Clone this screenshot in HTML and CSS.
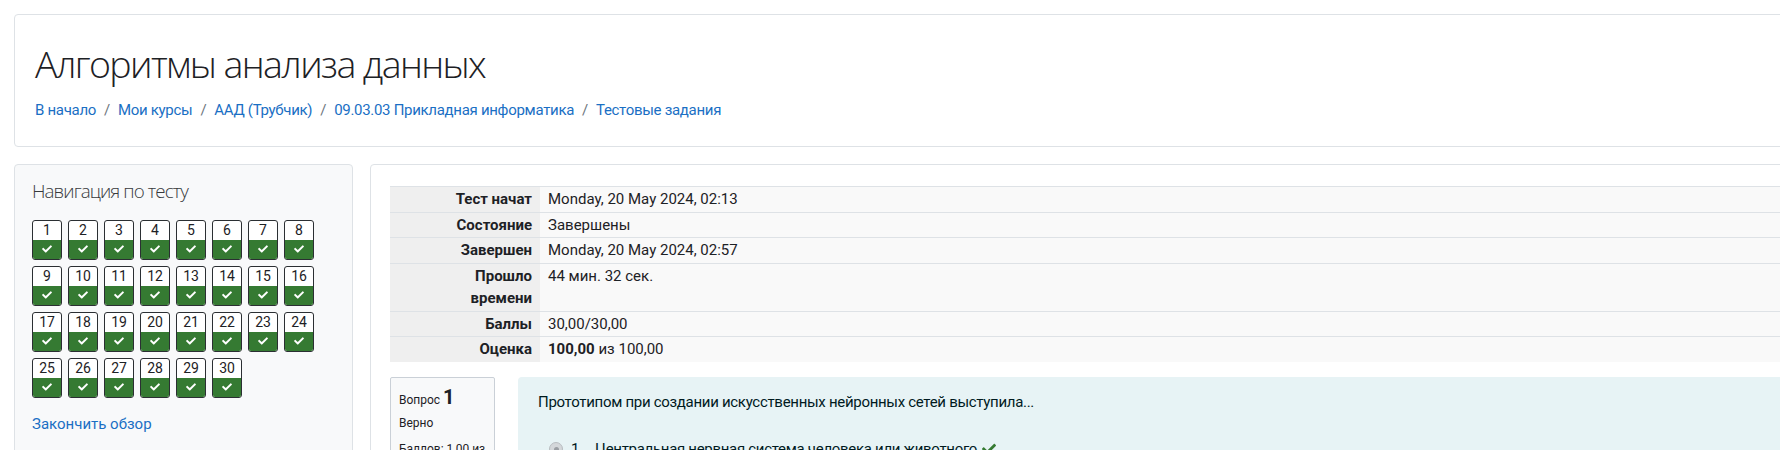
FILE: index.html
```html
<!DOCTYPE html>
<html lang="ru">
<head>
<meta charset="utf-8">
<title>Алгоритмы анализа данных</title>
<link rel="stylesheet" href="styles.css">
</head>
<body>
<div class="page">
  <header class="card header-card">
    <h1 class="title">Алгоритмы анализа данных</h1>
    <nav class="crumbs">
      <a href="#">В начало</a><span class="sep">/</span>
      <a href="#">Мои курсы</a><span class="sep">/</span>
      <a href="#">ААД (Трубчик)</a><span class="sep">/</span>
      <a href="#">09.03.03 Прикладная информатика</a><span class="sep">/</span>
      <a href="#">Тестовые задания</a>
    </nav>
  </header>

  <div class="main-row">
    <aside class="card nav-block">
      <h5 class="nav-title">Навигация по тесту</h5>
      <div class="qn-grid">
        <a class="qn" href="#"><span class="num">1</span><span class="ok"><svg viewBox="0 0 512 512"><path d="M173.9 439.4l-166.4-166.4c-10-10-10-26.2 0-36.2l36.2-36.2c10-10 26.2-10 36.2 0L192 312.7 432.1 72.6c10-10 26.2-10 36.2 0l36.2 36.2c10 10 10 26.2 0 36.2l-294.4 294.4c-10 10-26.2 10-36.2 0z"/></svg></span></a>
        <a class="qn" href="#"><span class="num">2</span><span class="ok"><svg viewBox="0 0 512 512"><path d="M173.9 439.4l-166.4-166.4c-10-10-10-26.2 0-36.2l36.2-36.2c10-10 26.2-10 36.2 0L192 312.7 432.1 72.6c10-10 26.2-10 36.2 0l36.2 36.2c10 10 10 26.2 0 36.2l-294.4 294.4c-10 10-26.2 10-36.2 0z"/></svg></span></a>
        <a class="qn" href="#"><span class="num">3</span><span class="ok"><svg viewBox="0 0 512 512"><path d="M173.9 439.4l-166.4-166.4c-10-10-10-26.2 0-36.2l36.2-36.2c10-10 26.2-10 36.2 0L192 312.7 432.1 72.6c10-10 26.2-10 36.2 0l36.2 36.2c10 10 10 26.2 0 36.2l-294.4 294.4c-10 10-26.2 10-36.2 0z"/></svg></span></a>
        <a class="qn" href="#"><span class="num">4</span><span class="ok"><svg viewBox="0 0 512 512"><path d="M173.9 439.4l-166.4-166.4c-10-10-10-26.2 0-36.2l36.2-36.2c10-10 26.2-10 36.2 0L192 312.7 432.1 72.6c10-10 26.2-10 36.2 0l36.2 36.2c10 10 10 26.2 0 36.2l-294.4 294.4c-10 10-26.2 10-36.2 0z"/></svg></span></a>
        <a class="qn" href="#"><span class="num">5</span><span class="ok"><svg viewBox="0 0 512 512"><path d="M173.9 439.4l-166.4-166.4c-10-10-10-26.2 0-36.2l36.2-36.2c10-10 26.2-10 36.2 0L192 312.7 432.1 72.6c10-10 26.2-10 36.2 0l36.2 36.2c10 10 10 26.2 0 36.2l-294.4 294.4c-10 10-26.2 10-36.2 0z"/></svg></span></a>
        <a class="qn" href="#"><span class="num">6</span><span class="ok"><svg viewBox="0 0 512 512"><path d="M173.9 439.4l-166.4-166.4c-10-10-10-26.2 0-36.2l36.2-36.2c10-10 26.2-10 36.2 0L192 312.7 432.1 72.6c10-10 26.2-10 36.2 0l36.2 36.2c10 10 10 26.2 0 36.2l-294.4 294.4c-10 10-26.2 10-36.2 0z"/></svg></span></a>
        <a class="qn" href="#"><span class="num">7</span><span class="ok"><svg viewBox="0 0 512 512"><path d="M173.9 439.4l-166.4-166.4c-10-10-10-26.2 0-36.2l36.2-36.2c10-10 26.2-10 36.2 0L192 312.7 432.1 72.6c10-10 26.2-10 36.2 0l36.2 36.2c10 10 10 26.2 0 36.2l-294.4 294.4c-10 10-26.2 10-36.2 0z"/></svg></span></a>
        <a class="qn" href="#"><span class="num">8</span><span class="ok"><svg viewBox="0 0 512 512"><path d="M173.9 439.4l-166.4-166.4c-10-10-10-26.2 0-36.2l36.2-36.2c10-10 26.2-10 36.2 0L192 312.7 432.1 72.6c10-10 26.2-10 36.2 0l36.2 36.2c10 10 10 26.2 0 36.2l-294.4 294.4c-10 10-26.2 10-36.2 0z"/></svg></span></a>
        <a class="qn" href="#"><span class="num">9</span><span class="ok"><svg viewBox="0 0 512 512"><path d="M173.9 439.4l-166.4-166.4c-10-10-10-26.2 0-36.2l36.2-36.2c10-10 26.2-10 36.2 0L192 312.7 432.1 72.6c10-10 26.2-10 36.2 0l36.2 36.2c10 10 10 26.2 0 36.2l-294.4 294.4c-10 10-26.2 10-36.2 0z"/></svg></span></a>
        <a class="qn" href="#"><span class="num">10</span><span class="ok"><svg viewBox="0 0 512 512"><path d="M173.9 439.4l-166.4-166.4c-10-10-10-26.2 0-36.2l36.2-36.2c10-10 26.2-10 36.2 0L192 312.7 432.1 72.6c10-10 26.2-10 36.2 0l36.2 36.2c10 10 10 26.2 0 36.2l-294.4 294.4c-10 10-26.2 10-36.2 0z"/></svg></span></a>
        <a class="qn" href="#"><span class="num">11</span><span class="ok"><svg viewBox="0 0 512 512"><path d="M173.9 439.4l-166.4-166.4c-10-10-10-26.2 0-36.2l36.2-36.2c10-10 26.2-10 36.2 0L192 312.7 432.1 72.6c10-10 26.2-10 36.2 0l36.2 36.2c10 10 10 26.2 0 36.2l-294.4 294.4c-10 10-26.2 10-36.2 0z"/></svg></span></a>
        <a class="qn" href="#"><span class="num">12</span><span class="ok"><svg viewBox="0 0 512 512"><path d="M173.9 439.4l-166.4-166.4c-10-10-10-26.2 0-36.2l36.2-36.2c10-10 26.2-10 36.2 0L192 312.7 432.1 72.6c10-10 26.2-10 36.2 0l36.2 36.2c10 10 10 26.2 0 36.2l-294.4 294.4c-10 10-26.2 10-36.2 0z"/></svg></span></a>
        <a class="qn" href="#"><span class="num">13</span><span class="ok"><svg viewBox="0 0 512 512"><path d="M173.9 439.4l-166.4-166.4c-10-10-10-26.2 0-36.2l36.2-36.2c10-10 26.2-10 36.2 0L192 312.7 432.1 72.6c10-10 26.2-10 36.2 0l36.2 36.2c10 10 10 26.2 0 36.2l-294.4 294.4c-10 10-26.2 10-36.2 0z"/></svg></span></a>
        <a class="qn" href="#"><span class="num">14</span><span class="ok"><svg viewBox="0 0 512 512"><path d="M173.9 439.4l-166.4-166.4c-10-10-10-26.2 0-36.2l36.2-36.2c10-10 26.2-10 36.2 0L192 312.7 432.1 72.6c10-10 26.2-10 36.2 0l36.2 36.2c10 10 10 26.2 0 36.2l-294.4 294.4c-10 10-26.2 10-36.2 0z"/></svg></span></a>
        <a class="qn" href="#"><span class="num">15</span><span class="ok"><svg viewBox="0 0 512 512"><path d="M173.9 439.4l-166.4-166.4c-10-10-10-26.2 0-36.2l36.2-36.2c10-10 26.2-10 36.2 0L192 312.7 432.1 72.6c10-10 26.2-10 36.2 0l36.2 36.2c10 10 10 26.2 0 36.2l-294.4 294.4c-10 10-26.2 10-36.2 0z"/></svg></span></a>
        <a class="qn" href="#"><span class="num">16</span><span class="ok"><svg viewBox="0 0 512 512"><path d="M173.9 439.4l-166.4-166.4c-10-10-10-26.2 0-36.2l36.2-36.2c10-10 26.2-10 36.2 0L192 312.7 432.1 72.6c10-10 26.2-10 36.2 0l36.2 36.2c10 10 10 26.2 0 36.2l-294.4 294.4c-10 10-26.2 10-36.2 0z"/></svg></span></a>
        <a class="qn" href="#"><span class="num">17</span><span class="ok"><svg viewBox="0 0 512 512"><path d="M173.9 439.4l-166.4-166.4c-10-10-10-26.2 0-36.2l36.2-36.2c10-10 26.2-10 36.2 0L192 312.7 432.1 72.6c10-10 26.2-10 36.2 0l36.2 36.2c10 10 10 26.2 0 36.2l-294.4 294.4c-10 10-26.2 10-36.2 0z"/></svg></span></a>
        <a class="qn" href="#"><span class="num">18</span><span class="ok"><svg viewBox="0 0 512 512"><path d="M173.9 439.4l-166.4-166.4c-10-10-10-26.2 0-36.2l36.2-36.2c10-10 26.2-10 36.2 0L192 312.7 432.1 72.6c10-10 26.2-10 36.2 0l36.2 36.2c10 10 10 26.2 0 36.2l-294.4 294.4c-10 10-26.2 10-36.2 0z"/></svg></span></a>
        <a class="qn" href="#"><span class="num">19</span><span class="ok"><svg viewBox="0 0 512 512"><path d="M173.9 439.4l-166.4-166.4c-10-10-10-26.2 0-36.2l36.2-36.2c10-10 26.2-10 36.2 0L192 312.7 432.1 72.6c10-10 26.2-10 36.2 0l36.2 36.2c10 10 10 26.2 0 36.2l-294.4 294.4c-10 10-26.2 10-36.2 0z"/></svg></span></a>
        <a class="qn" href="#"><span class="num">20</span><span class="ok"><svg viewBox="0 0 512 512"><path d="M173.9 439.4l-166.4-166.4c-10-10-10-26.2 0-36.2l36.2-36.2c10-10 26.2-10 36.2 0L192 312.7 432.1 72.6c10-10 26.2-10 36.2 0l36.2 36.2c10 10 10 26.2 0 36.2l-294.4 294.4c-10 10-26.2 10-36.2 0z"/></svg></span></a>
        <a class="qn" href="#"><span class="num">21</span><span class="ok"><svg viewBox="0 0 512 512"><path d="M173.9 439.4l-166.4-166.4c-10-10-10-26.2 0-36.2l36.2-36.2c10-10 26.2-10 36.2 0L192 312.7 432.1 72.6c10-10 26.2-10 36.2 0l36.2 36.2c10 10 10 26.2 0 36.2l-294.4 294.4c-10 10-26.2 10-36.2 0z"/></svg></span></a>
        <a class="qn" href="#"><span class="num">22</span><span class="ok"><svg viewBox="0 0 512 512"><path d="M173.9 439.4l-166.4-166.4c-10-10-10-26.2 0-36.2l36.2-36.2c10-10 26.2-10 36.2 0L192 312.7 432.1 72.6c10-10 26.2-10 36.2 0l36.2 36.2c10 10 10 26.2 0 36.2l-294.4 294.4c-10 10-26.2 10-36.2 0z"/></svg></span></a>
        <a class="qn" href="#"><span class="num">23</span><span class="ok"><svg viewBox="0 0 512 512"><path d="M173.9 439.4l-166.4-166.4c-10-10-10-26.2 0-36.2l36.2-36.2c10-10 26.2-10 36.2 0L192 312.7 432.1 72.6c10-10 26.2-10 36.2 0l36.2 36.2c10 10 10 26.2 0 36.2l-294.4 294.4c-10 10-26.2 10-36.2 0z"/></svg></span></a>
        <a class="qn" href="#"><span class="num">24</span><span class="ok"><svg viewBox="0 0 512 512"><path d="M173.9 439.4l-166.4-166.4c-10-10-10-26.2 0-36.2l36.2-36.2c10-10 26.2-10 36.2 0L192 312.7 432.1 72.6c10-10 26.2-10 36.2 0l36.2 36.2c10 10 10 26.2 0 36.2l-294.4 294.4c-10 10-26.2 10-36.2 0z"/></svg></span></a>
        <a class="qn" href="#"><span class="num">25</span><span class="ok"><svg viewBox="0 0 512 512"><path d="M173.9 439.4l-166.4-166.4c-10-10-10-26.2 0-36.2l36.2-36.2c10-10 26.2-10 36.2 0L192 312.7 432.1 72.6c10-10 26.2-10 36.2 0l36.2 36.2c10 10 10 26.2 0 36.2l-294.4 294.4c-10 10-26.2 10-36.2 0z"/></svg></span></a>
        <a class="qn" href="#"><span class="num">26</span><span class="ok"><svg viewBox="0 0 512 512"><path d="M173.9 439.4l-166.4-166.4c-10-10-10-26.2 0-36.2l36.2-36.2c10-10 26.2-10 36.2 0L192 312.7 432.1 72.6c10-10 26.2-10 36.2 0l36.2 36.2c10 10 10 26.2 0 36.2l-294.4 294.4c-10 10-26.2 10-36.2 0z"/></svg></span></a>
        <a class="qn" href="#"><span class="num">27</span><span class="ok"><svg viewBox="0 0 512 512"><path d="M173.9 439.4l-166.4-166.4c-10-10-10-26.2 0-36.2l36.2-36.2c10-10 26.2-10 36.2 0L192 312.7 432.1 72.6c10-10 26.2-10 36.2 0l36.2 36.2c10 10 10 26.2 0 36.2l-294.4 294.4c-10 10-26.2 10-36.2 0z"/></svg></span></a>
        <a class="qn" href="#"><span class="num">28</span><span class="ok"><svg viewBox="0 0 512 512"><path d="M173.9 439.4l-166.4-166.4c-10-10-10-26.2 0-36.2l36.2-36.2c10-10 26.2-10 36.2 0L192 312.7 432.1 72.6c10-10 26.2-10 36.2 0l36.2 36.2c10 10 10 26.2 0 36.2l-294.4 294.4c-10 10-26.2 10-36.2 0z"/></svg></span></a>
        <a class="qn" href="#"><span class="num">29</span><span class="ok"><svg viewBox="0 0 512 512"><path d="M173.9 439.4l-166.4-166.4c-10-10-10-26.2 0-36.2l36.2-36.2c10-10 26.2-10 36.2 0L192 312.7 432.1 72.6c10-10 26.2-10 36.2 0l36.2 36.2c10 10 10 26.2 0 36.2l-294.4 294.4c-10 10-26.2 10-36.2 0z"/></svg></span></a>
        <a class="qn" href="#"><span class="num">30</span><span class="ok"><svg viewBox="0 0 512 512"><path d="M173.9 439.4l-166.4-166.4c-10-10-10-26.2 0-36.2l36.2-36.2c10-10 26.2-10 36.2 0L192 312.7 432.1 72.6c10-10 26.2-10 36.2 0l36.2 36.2c10 10 10 26.2 0 36.2l-294.4 294.4c-10 10-26.2 10-36.2 0z"/></svg></span></a>
      </div>
      <a class="finish" href="#">Закончить обзор</a>
    </aside>

    <section class="card main-card">
      <table class="summary">
        <tr><th>Тест начат</th><td>Monday, 20 May 2024, 02:13</td></tr>
        <tr><th>Состояние</th><td>Завершены</td></tr>
        <tr><th>Завершен</th><td>Monday, 20 May 2024, 02:57</td></tr>
        <tr><th>Прошло времени</th><td>44 мин. 32 сек.</td></tr>
        <tr><th>Баллы</th><td>30,00/30,00</td></tr>
        <tr><th>Оценка</th><td><b>100,00</b> из 100,00</td></tr>
      </table>

      <div class="que">
        <div class="info">
          <div class="qno">Вопрос <span class="qnum">1</span></div>
          <div class="state">Верно</div>
          <div class="grade">Баллов: 1,00 из 1,00</div>
        </div>
        <div class="formulation">
          <div class="qtext">Прототипом при создании искусственных нейронных сетей выступила...</div>
          <div class="answer">
            <span class="radio"><span class="dot"></span></span>
            <span class="anum">1.</span>
            <span class="atext">Центральная нервная система человека или животного</span>
            <svg class="acheck" viewBox="0 0 512 512"><path d="M173.9 439.4l-166.4-166.4c-10-10-10-26.2 0-36.2l36.2-36.2c10-10 26.2-10 36.2 0L192 312.7 432.1 72.6c10-10 26.2-10 36.2 0l36.2 36.2c10 10 10 26.2 0 36.2l-294.4 294.4c-10 10-26.2 10-36.2 0z"/></svg>
          </div>
        </div>
      </div>
    </section>
  </div>
</div>
</body>
</html>
```
FILE: styles.css
```css
html, body {
  margin: 0;
  padding: 0;
}
body {
  overflow: hidden;
  background: #fff;
  font-family: Roboto, "Noto Sans", sans-serif;
  font-size: 15px;
  line-height: 22.5px;
  color: #1d2125;
}
a {
  color: #1a6fc4;
  text-decoration: none;
}
.page {
  width: 1900px;
  padding: 14px 0 0 14px;
  display: flex;
  flex-direction: column;
  gap: 17px;
}
.card {
  border: 1px solid #dee2e6;
  border-radius: 4px;
  background: #fff;
  box-sizing: border-box;
}
.header-card {
  height: 133px;
  padding: 26px 20px 0 20px;
}
.title {
  margin: 0;
  font-family: "Open Sans", Roboto, sans-serif;
  font-size: 37.5px;
  line-height: 45px;
  font-weight: 300;
  letter-spacing: -1.6px;
  color: #1d2125;
}
.crumbs {
  margin-top: 13px;
  display: flex;
  align-items: baseline;
  letter-spacing: -0.3px;
}
.crumbs .sep {
  color: #6c757d;
  padding: 0 8px;
}
.main-row {
  display: flex;
  gap: 17px;
  align-items: flex-start;
}
.nav-block {
  width: 339px;
  flex: none;
  height: 320px;
  background: #f8f9fa;
  padding: 15px 17px;
}
.nav-title {
  margin: 0;
  font-family: "Open Sans", Roboto, sans-serif;
  font-size: 18.75px;
  line-height: 22.5px;
  font-weight: 300;
  letter-spacing: -0.9px;
  color: #373a3c;
}
.qn-grid {
  margin-top: 17px;
  display: grid;
  grid-template-columns: repeat(8, 30px);
  gap: 6px;
}
.qn {
  width: 30px;
  height: 40px;
  box-sizing: border-box;
  border: 1px solid #2b2f33;
  border-radius: 3px;
  overflow: hidden;
  display: flex;
  flex-direction: column;
  background: #fff;
}
.qn .num {
  height: 19px;
  font-size: 14px;
  line-height: 19px;
  text-align: center;
  color: #1d2125;
}
.qn .ok {
  flex: 1;
  background: #357a32;
  display: flex;
  align-items: center;
  justify-content: center;
}
.qn .ok svg {
  width: 10px;
  height: 10px;
  fill: #fff;
}
.finish {
  display: block;
  margin-top: 15px;
}
.main-card {
  flex: 1;
  padding: 21px 19px 0 19px;
  height: 320px;
}
.summary {
  width: 100%;
  border-collapse: collapse;
  margin-bottom: 15px;
}
.summary th, .summary td {
  padding: 1px 8px;
  line-height: 22.5px;
  vertical-align: top;
  border-top: 1px solid #dee2e6;
}
.summary th {
  width: 106px;
  padding-left: 36px;
  text-align: right;
  background: #efefef;
  font-weight: 700;
}
.summary td {
  text-align: left;
  background: #f9f9f9;
}
.que {
  display: flex;
  gap: 23px;
  align-items: flex-start;
}
.info {
  width: 105px;
  flex: none;
  box-sizing: border-box;
  background: #f8f9fa;
  border: 1px solid #cad0d7;
  border-radius: 2px;
  padding: 7px 8px;
  font-size: 12px;
  line-height: 18px;
  height: 120px;
}
.qno {
  line-height: 24px;
}
.qnum {
  font-size: 20px;
  font-weight: 700;
}
.state {
  margin-top: 2px;
}
.grade {
  margin-top: 8px;
}
.formulation {
  flex: 1;
  background: #e7f3f5;
  color: #001a1e;
  border-radius: 4px;
  padding: 14px 20px;
  height: 200px;
  letter-spacing: -0.3px;
}
.answer {
  margin-top: 25px;
  padding-left: 11px;
  display: flex;
  align-items: center;
}
.radio {
  width: 12px;
  height: 12px;
  border-radius: 50%;
  background: #d4d7da;
  border: 1px solid #b9bdc1;
  display: flex;
  align-items: center;
  justify-content: center;
}
.radio .dot {
  width: 5px;
  height: 5px;
  border-radius: 50%;
  background: #9a9ea3;
}
.anum {
  margin-left: 8px;
  width: 24px;
}
.acheck {
  width: 14px;
  height: 14px;
  fill: #357a32;
  margin-left: 5px;
}
```
